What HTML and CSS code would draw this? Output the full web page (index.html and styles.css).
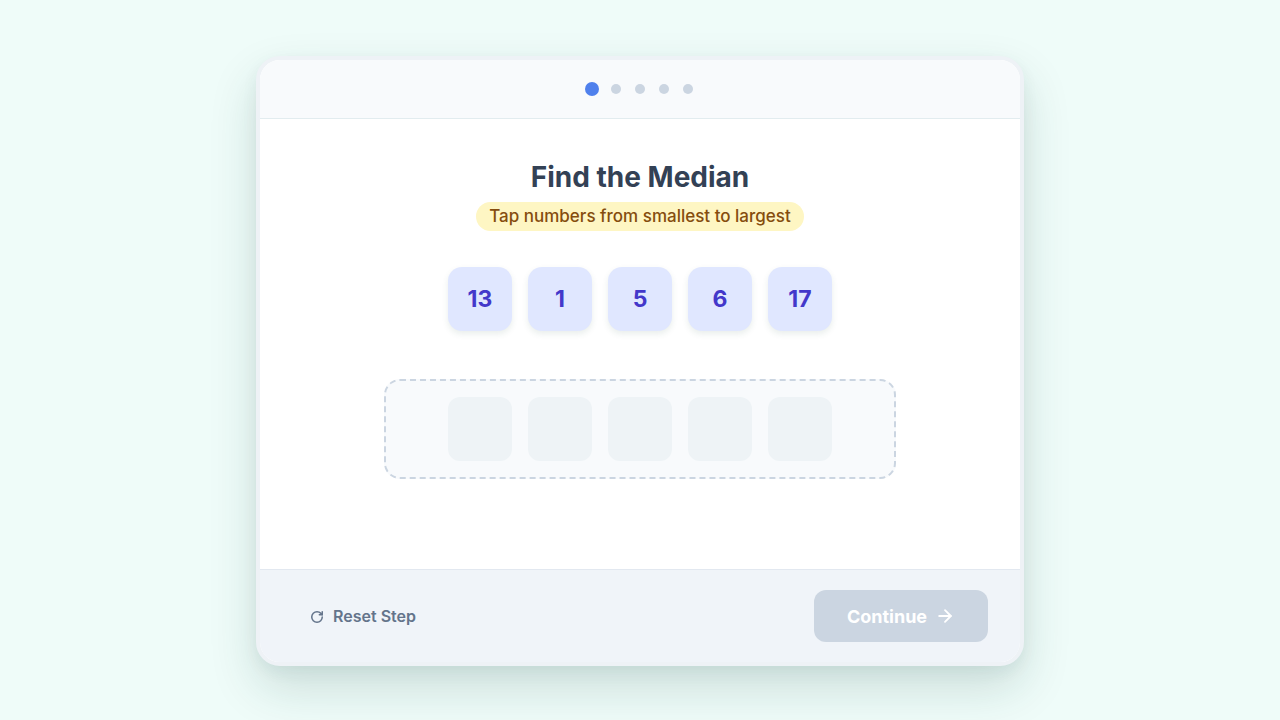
FILE: index.html
```html
<!DOCTYPE html>
<html lang="en">
<head>
<meta charset="utf-8">
<title>Find the Median</title>
<link rel="stylesheet" href="styles.css">
</head>
<body>
<div class="card">
  <div class="card-header">
    <div class="dots">
      <span class="dot active"></span>
      <span class="dot"></span>
      <span class="dot"></span>
      <span class="dot"></span>
      <span class="dot"></span>
    </div>
  </div>
  <div class="card-body">
    <h2 class="title">Find the Median</h2>
    <div class="hint">Tap numbers from smallest to largest</div>
    <div class="tiles">
      <button class="tile">13</button>
      <button class="tile">1</button>
      <button class="tile">5</button>
      <button class="tile">6</button>
      <button class="tile">17</button>
    </div>
    <div class="dropzone">
      <div class="slot"></div>
      <div class="slot"></div>
      <div class="slot"></div>
      <div class="slot"></div>
      <div class="slot"></div>
    </div>
  </div>
  <div class="card-footer">
    <button class="reset">
      <svg class="reset-icon" viewBox="0 0 24 24" width="14" height="14" fill="none" stroke="currentColor" stroke-width="2.6" stroke-linecap="round" stroke-linejoin="round"><path d="M21 12a9 9 0 1 1-9-9c2.52 0 4.93 1 6.74 2.74L21 8"/><path d="M21 3v5h-5"/></svg>
      <span>Reset Step</span>
    </button>
    <button class="continue" disabled>
      <span>Continue</span>
      <svg viewBox="0 0 24 24" width="20" height="20" fill="none" stroke="currentColor" stroke-width="2.2" stroke-linecap="round" stroke-linejoin="round"><path d="M5 12h14"/><path d="m12 5 7 7-7 7"/></svg>
    </button>
  </div>
</div>
</body>
</html>
```

FILE: styles.css
```css
* { box-sizing: border-box; }
html, body { margin: 0; padding: 0; }
body {
  background: #effcf9;
  font-family: Inter, "Noto Sans", sans-serif;
  height: 100vh;
  display: flex;
  align-items: center;
  justify-content: center;
}
.card {
  width: 768px;
  margin-top: 2px;
  border: 4px solid #eef2f6;
  border-radius: 24px;
  overflow: hidden;
  background: #ffffff;
  box-shadow: 0 22px 48px rgba(20, 70, 60, 0.16), 0 6px 16px rgba(20, 70, 60, 0.06);
  display: flex;
  flex-direction: column;
}
.card-header {
  height: 59px;
  background: #f8fafc;
  border-bottom: 1px solid #e2ecef;
  display: flex;
  align-items: center;
  justify-content: center;
}
.dots { display: flex; gap: 14px; align-items: center; }
.dot {
  width: 10px; height: 10px; border-radius: 50%;
  background: #cbd5e1;
}
.dot.active { background: #4f80ec; transform: scale(1.4); }
.card-body {
  height: 450px;
  padding-top: 40px;
  display: flex;
  flex-direction: column;
  align-items: center;
}
.title {
  margin: 0;
  font-size: 28px;
  line-height: 36px;
  font-weight: 700;
  color: #334155;
}
.hint {
  margin-top: 7px;
  background: #fef6c3;
  color: #854d0e;
  font-size: 17px;
  line-height: 21px;
  font-weight: 500;
  padding: 4px 13px;
  border-radius: 999px;
}
.tiles {
  margin-top: 36px;
  display: flex;
  gap: 16px;
}
.tile {
  width: 64px; height: 64px;
  border: none;
  border-radius: 14px;
  background: #e0e7ff;
  color: #4338ca;
  font-family: Inter, "Noto Sans", sans-serif;
  font-size: 23px;
  font-weight: 700;
  box-shadow: 0 3px 6px rgba(40, 90, 70, 0.10);
  padding: 0;
}
.dropzone {
  margin-top: 48px;
  width: 512px;
  padding: 16px;
  border: 2px dashed #cbd5e1;
  border-radius: 16px;
  background: #f8fafc;
  display: flex;
  justify-content: center;
  gap: 16px;
}
.slot {
  width: 64px; height: 64px;
  border-radius: 12px;
  background: #eef3f6;
}
.card-footer {
  height: 93px;
  background: #f0f4f9;
  border-top: 1px solid #e2e8f0;
  padding: 20px 32px;
  display: flex;
  align-items: center;
  justify-content: space-between;
}
.reset {
  border: none;
  background: transparent;
  display: flex;
  align-items: center;
  gap: 9px;
  padding: 8px 18px;
  color: #64748b;
  font-family: Inter, "Noto Sans", sans-serif;
  font-size: 16px;
  font-weight: 600;
}
.reset-icon { margin-top: 1px; }
.continue {
  width: 174px;
  height: 52px;
  border: none;
  border-radius: 12px;
  background: #cbd5e1;
  color: #ffffff;
  font-family: Inter, "Noto Sans", sans-serif;
  font-size: 18px;
  font-weight: 700;
  display: flex;
  align-items: center;
  justify-content: center;
  gap: 8px;
  padding: 0;
}
```
